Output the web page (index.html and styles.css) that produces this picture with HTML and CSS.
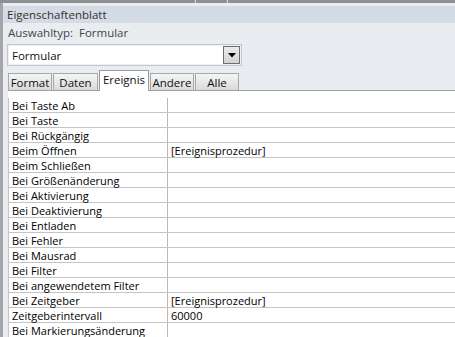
FILE: index.html
```html
<!DOCTYPE html>
<html lang="de">
<head>
    <meta charset="UTF-8">
    <title>Eigenschaftenblatt</title>
    <link rel="stylesheet" href="styles.css">
</head>
<body>
    <div class="sheet">
        <div class="top-strip">
            <span class="sep sep-a"></span>
            <span class="sep sep-b"></span>
        </div>
        <div class="title">Eigenschaftenblatt</div>
        <div class="subtitle">Auswahltyp:&nbsp;&nbsp;Formular</div>

        <div class="combo">
            <span class="combo-text">Formular</span>
            <span class="combo-btn">
                <svg width="8" height="5" viewBox="0 0 8 5"><path d="M0 0H8L4 4.5Z" fill="#000"/></svg>
            </span>
        </div>

        <div class="tabs">
            <div class="tab tab-format">Format</div>
            <div class="tab tab-daten">Daten</div>
            <div class="tab tab-ereignis active">Ereignis</div>
            <div class="tab tab-andere">Andere</div>
            <div class="tab tab-alle">Alle</div>
        </div>

        <div class="panel">
            <div class="grid">
                <div class="row"><div class="name">Bei Taste Ab</div><div class="value"></div></div>
                <div class="row"><div class="name">Bei Taste</div><div class="value"></div></div>
                <div class="row"><div class="name">Bei Rückgängig</div><div class="value"></div></div>
                <div class="row"><div class="name">Beim Öffnen</div><div class="value">[Ereignisprozedur]</div></div>
                <div class="row"><div class="name">Beim Schließen</div><div class="value"></div></div>
                <div class="row"><div class="name">Bei Größenänderung</div><div class="value"></div></div>
                <div class="row"><div class="name">Bei Aktivierung</div><div class="value"></div></div>
                <div class="row"><div class="name">Bei Deaktivierung</div><div class="value"></div></div>
                <div class="row"><div class="name">Bei Entladen</div><div class="value"></div></div>
                <div class="row"><div class="name">Bei Fehler</div><div class="value"></div></div>
                <div class="row"><div class="name">Bei Mausrad</div><div class="value"></div></div>
                <div class="row"><div class="name">Bei Filter</div><div class="value"></div></div>
                <div class="row"><div class="name">Bei angewendetem Filter</div><div class="value"></div></div>
                <div class="row"><div class="name">Bei Zeitgeber</div><div class="value">[Ereignisprozedur]</div></div>
                <div class="row"><div class="name">Zeitgeberintervall</div><div class="value">60000</div></div>
                <div class="row"><div class="name">Bei Markierungsänderung</div><div class="value"></div></div>
            </div>
        </div>
    </div>
</body>
</html>
```

FILE: styles.css
```css
* {
    margin: 0;
    padding: 0;
    box-sizing: border-box;
}

html, body {
    width: 455px;
    height: 337px;
    overflow: hidden;
}

body {
    background-color: #e9edf1;
    font-family: 'Open Sans', 'Noto Sans', sans-serif;
    font-size: 11px;
    color: #000;
}

.sheet {
    height: 337px;
    border-left: 3px solid #a3a5a8;
    background: #e9edf1;
}

/* thin bar above the title */
.top-strip {
    position: relative;
    height: 3px;
    background: #8e9093;
    margin-left: -3px;
}

.sep {
    position: absolute;
    top: 0;
    width: 1px;
    height: 3px;
    background: #d8dadd;
}

.sep-a { left: 195px; }
.sep-b { left: 227px; }

.title {
    margin-top: 3px;
    height: 17px;
    line-height: 18px;
    padding-left: 4px;
    background: #d4dbe4;
    color: #333;
    font-size: 11.5px;
}

.subtitle {
    height: 21px;
    line-height: 19px;
    padding-left: 5px;
    color: #444;
    font-size: 11.5px;
}

.combo {
    display: flex;
    align-items: center;
    justify-content: space-between;
    margin-left: 4px;
    width: 235px;
    height: 22px;
    padding: 0 1px 0 4px;
    background: #fff;
    border: 1px solid #c2c5c9;
    box-shadow: inset 0 0 0 1px #eef0f2;
}

.combo-text {
    color: #111;
    font-size: 11.5px;
}

.combo-btn {
    display: flex;
    align-items: center;
    justify-content: center;
    width: 17px;
    height: 18px;
    border: 1px solid #6f6f6f;
    background: linear-gradient(#ececec, #d4d4d4);
}

.combo-btn svg {
    margin-top: 1px;
}

.tabs {
    display: flex;
    align-items: flex-end;
    gap: 1px;
    margin-left: 5px;
    margin-top: 4px;
    height: 20px;
    position: relative;
    z-index: 2;
}

.tab {
    height: 17px;
    line-height: 17px;
    text-align: center;
    color: #111;
    font-size: 11.5px;
    border: 1px solid #a6a8ab;
    border-bottom: none;
    background: linear-gradient(#f6f6f6, #d9d9d9);
}

.tab-format { width: 44px; }
.tab-daten { width: 45px; }
.tab-ereignis { width: 50px; }
.tab-andere { width: 44px; }
.tab-alle { width: 44px; }

.tab.active {
    height: 21px;
    margin-bottom: -1px;
    line-height: 17px;
    background: #fff;
    border-color: #9a9c9f;
}

.panel {
    margin-left: 5px;
    background: #fff;
    border-top: 1px solid #9fa1a4;
    padding-top: 7px;
    height: 260px;
}

.grid {
    border-left: 1px solid #c4c4c4;
}

.row {
    display: flex;
    height: 15px;
    border-bottom: 1px solid #c4c4c4;
}

.name {
    width: 159px;
    padding-left: 3px;
    line-height: 15px;
    border-right: 1px solid #b9b9b9;
    white-space: nowrap;
}

.value {
    flex: 1;
    padding-left: 3px;
    line-height: 15px;
    white-space: nowrap;
}
```
